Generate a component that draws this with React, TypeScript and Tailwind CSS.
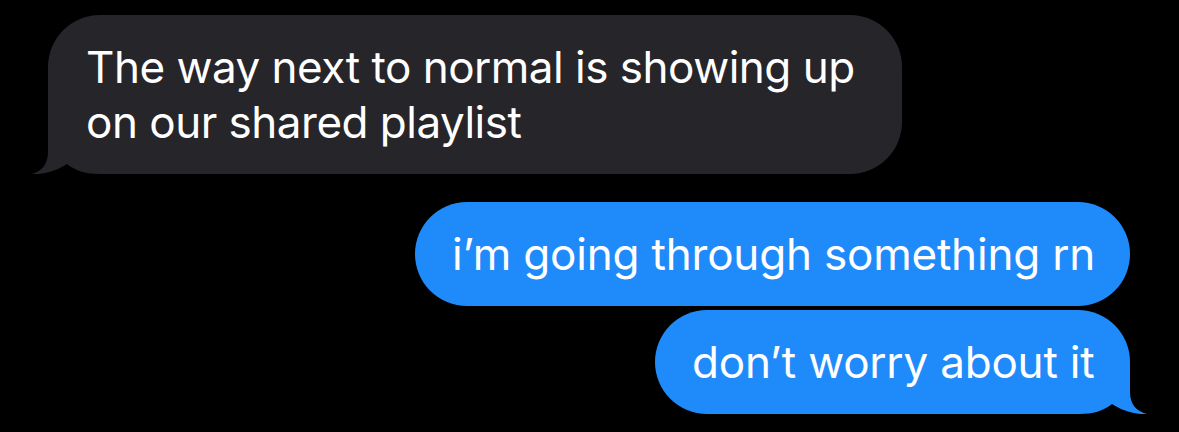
import React from "react";

const font = { fontFamily: "Inter, 'Noto Sans', sans-serif" };

function LeftTail() {
  return (
    <svg
      className="absolute bottom-0 left-[-16px]"
      width="68"
      height="52"
      viewBox="0 0 68 52"
    >
      <rect x="0" y="0" width="68" height="52" fill="#000000" />
      <path
        d="M16 0 L16 30 C16 42 10 49 0 52 C12 53 26 48 35 42 C44 49 54 52 68 52 L68 0 Z"
        fill="#26252a"
      />
    </svg>
  );
}

function RightTail() {
  return (
    <svg
      className="absolute bottom-0 right-[-17px] -scale-x-100"
      width="68"
      height="52"
      viewBox="0 0 68 52"
    >
      <rect x="0" y="0" width="68" height="52" fill="#000000" />
      <path
        d="M17 0 L17 30 C17 42 11 49 0 52 C12 53 26 48 35 42 C44 49 54 52 68 52 L68 0 Z"
        fill="#1f8bfb"
      />
    </svg>
  );
}

export default function App() {
  return (
    <div
      className="w-[1179px] h-[432px] bg-black flex flex-col overflow-hidden text-white"
      style={font}
    >
      <div className="relative ml-[48px] mt-[15px] w-[854px] rounded-[52px] bg-[#26252a] pl-[38px] pr-[20px] py-[24.5px] text-[44px] leading-[55px] tracking-[-0.5px]">
        <LeftTail />
        <div className="relative">
          The way next to normal is showing up
          <br />
          on our shared playlist
        </div>
      </div>
      <div className="self-end mr-[49px] mt-[28px] w-[715px] rounded-[52px] bg-[#1f8bfb] pl-[37px] py-[24.5px] text-[44px] leading-[55px] tracking-[-0.2px] whitespace-nowrap">
        i’m going through something rn
      </div>
      <div className="relative self-end mr-[49px] mt-[4px] w-[475px] rounded-[52px] bg-[#1f8bfb] pl-[37px] py-[24.5px] text-[44px] leading-[55px] tracking-[-0.2px] whitespace-nowrap">
        <RightTail />
        <div className="relative">don’t worry about it</div>
      </div>
    </div>
  );
}
